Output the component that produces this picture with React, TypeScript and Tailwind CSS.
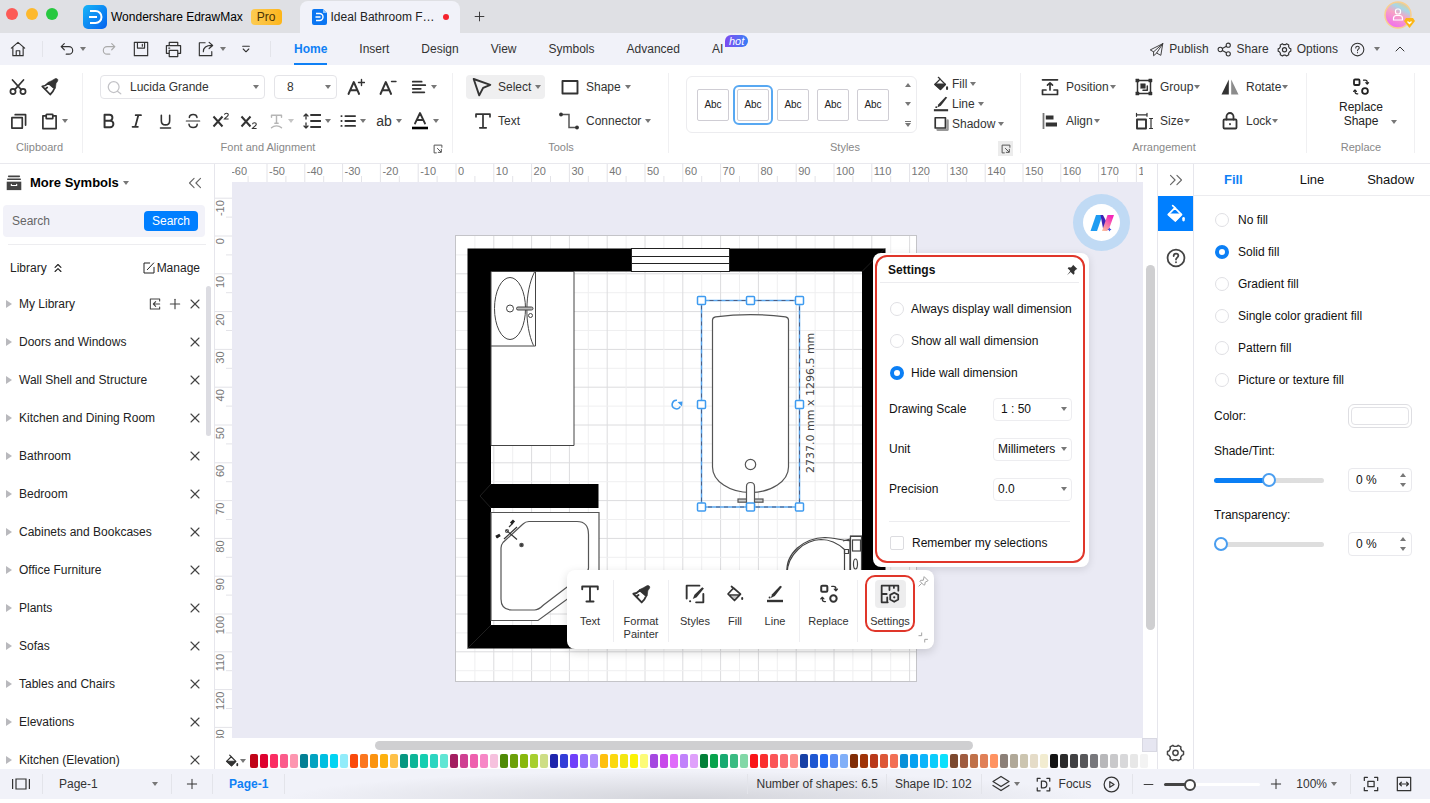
import { useState, type ReactNode } from "react";
import clsx from "clsx";
import { ChevronsLeft, ChevronsRight, ChevronsUp, ChevronUp, Minus, Plus, X } from "lucide-react";

interface IconProps {
  size?: number;
  stroke?: number;
  className?: string;
  children: ReactNode;
}

function Icon({ size = 18, stroke = 1.3, className, children }: IconProps) {
  return (
    <svg
      width={size}
      height={size}
      viewBox="0 0 18 18"
      fill="none"
      stroke="currentColor"
      strokeWidth={stroke}
      strokeLinecap="round"
      strokeLinejoin="round"
      aria-hidden="true"
      className={clsx("shrink-0", className)}
    >
      {children}
    </svg>
  );
}

function Caret({ up = false, className }: { up?: boolean; className?: string }) {
  return (
    <svg width="6" height="4" viewBox="0 0 6 4" aria-hidden="true" className={clsx("shrink-0 fill-[#777]", className)}>
      <path d={up ? "M0 4h6L3 0z" : "M0 0h6L3 4z"} />
    </svg>
  );
}

function BucketIcon({ size = 18 }: { size?: number }) {
  return (
    <Icon size={size} stroke={1.5}>
      <path d="M6 1.5l2.5 2.3M8 3.5l6 6-5.600 5.800L2 9.500z" />
      <path d="M2.500 9.300h11l-5.100 5.700z" fill="currentColor" />
      <path d="M15.800 12.800v1.700" strokeWidth="2.300" />
    </Icon>
  );
}

function PainterIcon({ size = 18 }: { size?: number }) {
  return (
    <Icon size={size} stroke={1.8}>
      <path d="M1.300 8.300C3.800 8 5.800 6.800 7.300 5l6.200 5.200c-.9 2.400-2.300 4.500-4.300 6.300z" />
      <path d="M7.300 4.300l3.400-1.600 3.800-2.200c1.600-.4 2.800 1 2.200 2.400L15 5.500l-.6 4.700-1.600-.3z" fill="currentColor" strokeWidth="0.600" />
      <path d="M4.300 10.900l1.900-1.400" />
    </Icon>
  );
}

function PenLineIcon({ size = 18 }: { size?: number }) {
  return (
    <Icon size={size}>
      <path d="M1 16h16" strokeWidth="2.400" strokeLinecap="butt" />
      <path d="M16 1.800L8.800 11 4.800 13l1.300-3.800L14.200.8z" fill="currentColor" stroke="none" />
      <circle cx="3.600" cy="12.600" r="1" fill="currentColor" stroke="none" />
    </Icon>
  );
}

function ReplaceIcon({ size = 18 }: { size?: number }) {
  return (
    <Icon size={size} stroke={1.8}>
      <rect x="2" y="1.500" width="5.500" height="5.500" rx="1" />
      <circle cx="13" cy="13" r="2.900" />
      <path
        d="M11.500 2.200h1.700c1.300 0 2 .8 2 2v1.500M13.800 4.600l1.400 1.500 1.400-1.500M5.800 15.800H5c-1.300 0-2-.8-2-2v-1.500M1.600 13.400L3 12l1.400 1.400"
        strokeWidth="1.200"
      />
    </Icon>
  );
}

function GearIcon({ size = 18 }: { size?: number }) {
  return (
    <Icon size={size} stroke={1.4}>
      <path d="M6.500 2.200l1.300 1h2.400l1.300-1 2.600 1.500-.2 1.700 1.100 2 1.600.7v2.900l-1.500.7-1.200 2 .2 1.600-2.600 1.500-1.400-1H7.900l-1.400 1-2.600-1.500.2-1.600-1.200-2-1.500-.7V8.100L3 7.400l1.100-2-.2-1.700z" />
      <circle cx="9" cy="9.300" r="2.500" />
    </Icon>
  );
}

function TextIcon({ size = 18 }: { size?: number }) {
  return (
    <Icon size={size} stroke={1.7}>
      <path d="M2 4.800V2.200h14v2.600M9 2.200v13.600M5.800 15.800h6.400" />
    </Icon>
  );
}

function HelpIcon({ size = 18, stroke = 1.3 }: { size?: number; stroke?: number }) {
  return (
    <Icon size={size} stroke={stroke}>
      <circle cx="9" cy="9" r="7.600" />
      <path d="M6.900 7.200C6.900 5.800 7.800 5 9 5s2.100.8 2.100 2c0 1.600-2.100 1.700-2.100 3.400M9 12.700v.2" />
    </Icon>
  );
}

function LauncherIcon() {
  return (
    <Icon size={10} stroke={1.8}>
      <path d="M6 16H2V2h14v4M8 8l6 6M15 9.500V15H9.500" />
    </Icon>
  );
}

function Divider({ className }: { className?: string }) {
  return <div className={clsx("w-px shrink-0 bg-[#e3e4ea]", className)} />;
}

function TitleBar() {
  return (
    <header className="flex h-[33px] shrink-0 items-end bg-[#dfe0e4]">
      <div className="ml-1.5 flex gap-2 self-start pt-2">
        <button type="button" aria-label="Close" className="size-3 rounded-full bg-[#fc5b57]" />
        <button type="button" aria-label="Minimize" className="size-3 rounded-full bg-[#fdb92d]" />
        <button type="button" aria-label="Zoom" className="size-3 rounded-full bg-[#27c840]" />
      </div>
      <button type="button" className="ml-[25px] flex h-[33px] items-center gap-1 text-[12px] text-black">
        <svg width="24" height="24" viewBox="0 0 24 24" aria-hidden="true">
          <defs>
            <linearGradient id="logo" x1="0" y1="0" x2="1" y2="1">
              <stop offset="0" stopColor="#16b5f8" />
              <stop offset="1" stopColor="#0561ee" />
            </linearGradient>
          </defs>
          <rect width="24" height="24" rx="5" fill="url(#logo)" />
          <path d="M7 6h5.500a6 6 0 010 12H7M6 12h8" fill="none" stroke="#fff" strokeWidth="2" />
        </svg>
        <span>Wondershare EdrawMax</span>
        <span className="ml-1 rounded bg-linear-to-r from-[#fccb50] to-[#fdb516] px-1.5 leading-4 text-[#4a3205]">Pro</span>
      </button>
      <button type="button" className="ml-[18px] flex h-8 w-[160px] items-center rounded-t-lg bg-[#f1f2f9] pl-3 text-[12px] text-[#222]">
        <svg width="15" height="16" viewBox="0 0 15 16" aria-hidden="true">
          <path d="M2 0h9l4 4v10a2 2 0 01-2 2H2a2 2 0 01-2-2V2a2 2 0 012-2z" fill="#0b76f2" />
          <path d="M11 0l4 4h-4z" fill="#8cc4fb" />
          <path d="M4 4.500h3.500a3.500 3.500 0 010 7H4M3.500 8h5" fill="none" stroke="#fff" strokeWidth="1.400" />
        </svg>
        <span className="ml-1">Ideal Bathroom F…</span>
        <span className="ml-2 size-1.5 rounded-full bg-[#f5222d]" />
      </button>
      <button type="button" aria-label="New tab" className="ml-3 flex h-[33px] items-center text-[#333]">
        <Plus size={15} strokeWidth={1.5} />
      </button>
      <button type="button" aria-label="Account" className="mr-[15px] ml-auto self-start">
        <svg width="32" height="30" viewBox="0 0 32 30" aria-hidden="true">
          <defs>
            <linearGradient id="avatar" x1="0.300" y1="1" x2="0.800" y2="0">
              <stop offset="0" stopColor="#f06bf0" />
              <stop offset="0.500" stopColor="#f7a3c4" />
              <stop offset="0.750" stopColor="#a6d8e8" />
              <stop offset="1" stopColor="#f6c878" />
            </linearGradient>
          </defs>
          <circle cx="15" cy="15" r="13" fill="url(#avatar)" stroke="#f8cf90" strokeWidth="1.500" />
          <g fill="none" stroke="#fff" strokeWidth="1.200">
            <rect x="12.500" y="9" width="5" height="5" rx="2" />
            <path d="M10.500 20v-1.500a3 3 0 013-3h3a3 3 0 013 3V20z" />
          </g>
          <path d="M23 18h7l2 3-5.500 7-5.500-7z" fill="#fcb614" />
          <path d="M24.500 21.500l2 2 2-2" fill="none" stroke="#fff" strokeWidth="1.300" />
        </svg>
      </button>
    </header>
  );
}

const MENUS = ["Home", "Insert", "Design", "View", "Symbols", "Advanced"];

function MenuBar() {
  return (
    <nav className="flex h-8 shrink-0 items-center bg-[#f1f2f9] text-[12px] text-[#333]">
      <button type="button" aria-label="Start page" className="ml-2.5">
        <Icon size={16}>
          <path d="M1.500 8L9 1.500 16.500 8M3.200 7v9.500h11.600V7M7 16.500V11h4v5.500" />
        </Icon>
      </button>
      <Divider className="ml-4 h-4" />
      <button type="button" aria-label="Undo" className="ml-[17px] flex items-center gap-1.5">
        <Icon size={14}>
          <path d="M5.500 2L1.500 6l4 4M2 6h9.500a4.800 4.800 0 010 9.600H8" strokeWidth="1.500" />
        </Icon>
        <Caret />
      </button>
      <button type="button" aria-label="Redo" className="ml-4 text-[#aaa]">
        <Icon size={14}>
          <path d="M12.500 2l4 4-4 4M16 6H6.500a4.800 4.800 0 000 9.600H10" strokeWidth="1.500" />
        </Icon>
      </button>
      <button type="button" aria-label="Save" className="ml-[17px]">
        <Icon size={16}>
          <path d="M1.500 1.500h15v15h-15zM5 1.500v6.500h8V1.500M10.500 3.800v2" />
        </Icon>
      </button>
      <button type="button" aria-label="Print" className="ml-4">
        <Icon size={17}>
          <path d="M4.500 5V1.500h9V5M4.500 13H1.500V5h15v8h-3M4.500 10h9v6.500h-9zM4 7.500h1" />
        </Icon>
      </button>
      <button type="button" aria-label="Export" className="ml-4 flex items-center gap-1.5">
        <Icon size={16}>
          <path d="M8 2H1.500v14.500h14V12M6 12c0-5 3-7 9.500-7M12.500 1.500L16.500 5l-4 3.500" />
        </Icon>
        <Caret />
      </button>
      <button type="button" aria-label="Customize toolbar" className="ml-[15px]">
        <Icon size={10} stroke={2}>
          <path d="M3 4h12M4 9l5 5 5-5" />
        </Icon>
      </button>
      <Divider className="ml-[19px] h-4" />
      <div className="ml-[23px] flex h-full items-center gap-8">
        {MENUS.map((menu, index) => (
          <button
            key={menu}
            type="button"
            className={clsx(
              "h-full border-y-2 border-transparent",
              index === 0 && "border-b-[#0f80f5] font-bold text-[#0f80f5]",
            )}
          >
            {menu}
          </button>
        ))}
        <button type="button" className="relative h-full">
          AI
          <span className="absolute top-[2px] left-[13px] rounded-full rounded-bl-none bg-linear-to-r from-[#7a4af0] to-[#2f7df6] px-1 text-[11px] leading-3 text-white italic">
            hot
          </span>
        </button>
      </div>
      <div className="mr-[22px] ml-auto flex items-center">
        <button type="button" className="flex items-center gap-[5px]">
          <Icon size={15}>
            <path d="M16.500 2L1.500 9.500l4 2.300L16.500 2l-2.300 14-5-2.700M5.500 11.800v4.700l3.700-3.200L16.500 2" strokeWidth="1.100" />
          </Icon>
          Publish
        </button>
        <button type="button" className="ml-2 flex items-center gap-[5px]">
          <Icon size={15}>
            <circle cx="4" cy="9" r="2.700" />
            <circle cx="13.500" cy="3.800" r="2.500" />
            <circle cx="13.500" cy="14.200" r="2.500" />
            <path d="M6.400 7.700l4.900-2.700M6.400 10.300l4.900 2.700" />
          </Icon>
          Share
        </button>
        <button type="button" className="ml-2 flex items-center gap-[5px]">
          <GearIcon size={15} />
          Options
        </button>
        <button type="button" aria-label="Help" className="ml-3 flex items-center gap-2">
          <HelpIcon size={15} />
          <Caret className="ml-px" />
        </button>
        <button type="button" aria-label="Collapse ribbon" className="ml-3">
          <ChevronUp size={16} strokeWidth={1.5} />
        </button>
      </div>
    </nav>
  );
}

interface GroupProps {
  label: string;
  className?: string;
  launcher?: boolean;
  shaded?: boolean;
  children: ReactNode;
}

function Group({ label, className, launcher, shaded, children }: GroupProps) {
  return (
    <section className={clsx("relative flex shrink-0 flex-col pt-[5px]", className)}>
      <div className="flex h-[68px] flex-col">{children}</div>
      <div className="text-center text-[11px] leading-[18px] text-[#888]">{label}</div>
      {launcher && (
        <button
          type="button"
          aria-label={`${label} options`}
          className={clsx("absolute right-2 bottom-[7px] flex size-[15px] items-center justify-center text-[#555]", shaded && "bg-[#ececec]")}
        >
          <LauncherIcon />
        </button>
      )}
      <Divider className="absolute top-2 right-0 h-[80px] !bg-[#f0f0f2]" />
    </section>
  );
}

function ToolButton({ label, className, children }: { label: string; className?: string; children: ReactNode }) {
  return (
    <button type="button" aria-label={label} className={clsx("flex h-[34px] items-center justify-center gap-1", className)}>
      {children}
    </button>
  );
}

function ScriptIcon({ sub = false }: { sub?: boolean }) {
  return (
    <svg width="18" height="18" viewBox="0 0 18 18" fill="none" stroke="currentColor" aria-hidden="true">
      <path d="M1.500 4.500l9 10M10.500 4.500l-9 10" strokeWidth="2" />
      <path
        d={sub ? "M12.500 12.200c.2-2 3.800-2 3.800 0 0 1.500-2.600 2.500-3.900 4.300h4.200" : "M12.500 2.700c.2-2 3.800-2 3.800 0 0 1.500-2.600 2.500-3.900 4.300h4.200"}
        strokeWidth="1.100"
      />
    </svg>
  );
}

function FontGroup() {
  return (
    <Group label="Font and Alignment" launcher className="w-[370px]">
      <div className="flex h-[34px] items-center pl-[17px]">
        <label className="relative flex h-6 w-[165px] items-center rounded border border-[#e4e4e8]">
          <Icon size={15} stroke={1.5} className="ml-1.5 text-[#c2c2c6]">
            <circle cx="8" cy="8.500" r="6.500" />
            <path d="M12.500 13.500l4 3" />
          </Icon>
          <select aria-label="Font family" className="h-full w-full appearance-none pl-2 outline-none">
            <option>Lucida Grande</option>
            <option>Helvetica</option>
          </select>
          <Caret className="absolute right-[5px]" />
        </label>
        <label className="relative ml-[9px] flex h-6 w-[63px] items-center rounded border border-[#e4e4e8]">
          <select aria-label="Font size" className="h-full w-full appearance-none pl-3 outline-none">
            <option>8</option>
            <option>10</option>
          </select>
          <Caret className="absolute right-[5px]" />
        </label>
        <ToolButton label="Increase font size" className="ml-[3px] w-8">
          <Icon stroke={1.9}>
            <path d="M1.500 16L6.800 4l5.300 12M3.200 12.300h7.200" />
            <path d="M14.500 1.500v6M11.500 4.500h6" strokeWidth="1.400" />
          </Icon>
        </ToolButton>
        <ToolButton label="Decrease font size" className="w-8">
          <Icon stroke={1.9}>
            <path d="M1.500 16L6.800 4l5.300 12M3.200 12.300h7.200" />
            <path d="M12.500 3.500h4.500" strokeWidth="1.400" />
          </Icon>
        </ToolButton>
        <ToolButton label="Paragraph alignment" className="w-10">
          <Icon size={16} stroke={2}>
            <path d="M2 3h10M2 7h14M2 11h9M2 15h13" />
          </Icon>
          <Caret />
        </ToolButton>
      </div>
      <div className="flex h-[34px] items-center pl-3">
        <ToolButton label="Bold" className="w-7">
          <Icon size={16} stroke={2.2}>
            <path d="M4 2h5.500a3.300 3.300 0 010 6.700H4zM4 8.700h6.300a3.600 3.600 0 010 7.300H4z" />
          </Icon>
        </ToolButton>
        <ToolButton label="Italic" className="w-7">
          <Icon size={16} stroke={2}>
            <path d="M7.500 2.500h6M4 15.500h6M10.500 2.500l-3.500 13" />
          </Icon>
        </ToolButton>
        <ToolButton label="Underline" className="w-7">
          <Icon size={15} stroke={1.9}>
            <path d="M4 1.500v6.500c0 3 2 5 5 5s5-2 5-5V1.500M3 16.800h12" />
          </Icon>
        </ToolButton>
        <ToolButton label="Strikethrough" className="w-7">
          <Icon size={16} stroke={1.7}>
            <path d="M13.500 5c-.3-2-2-3.200-4.300-3.200-2.500 0-4.300 1.200-4.300 3.200M13.700 12.700c0 2.200-1.900 3.600-4.500 3.600s-4.500-1.400-4.700-3.600" />
            <path d="M1.500 9h15" strokeWidth="1.400" />
          </Icon>
        </ToolButton>
        <ToolButton label="Superscript" className="w-7">
          <ScriptIcon />
        </ToolButton>
        <ToolButton label="Subscript" className="w-7">
          <ScriptIcon sub />
        </ToolButton>
        <ToolButton label="Text direction" className="w-9 text-[#b5b5b5]">
          <Icon size={15} stroke={1.7}>
            <path d="M3 4V1.500h12V4M9 1.500V11M7 11h4M3 16.500c3-3 9-3 12 0" />
          </Icon>
          <Caret className="!fill-[#c5c5c5]" />
        </ToolButton>
        <ToolButton label="Line spacing" className="w-9">
          <Icon stroke={1.9}>
            <path d="M8 3h9.500M8 9h9.500M8 15h9.500" />
            <path d="M3 2v5M3 11v5M1 4l2-2 2 2M1 14l2 2 2-2" strokeWidth="1.300" />
          </Icon>
          <Caret />
        </ToolButton>
        <ToolButton label="Bullets" className="w-9">
          <Icon size={16} stroke={2}>
            <path d="M6 3.500h11M6 9h11M6 14.500h11M1.500 3.500h.4M1.500 9h.4M1.500 14.500h.4" />
          </Icon>
          <Caret />
        </ToolButton>
        <ToolButton label="Text case" className="w-9">
          <span className="text-[14px]">ab</span>
          <Caret />
        </ToolButton>
        <ToolButton label="Font color" className="w-9">
          <Icon size={18} stroke={1.8}>
            <path d="M4 11.500L9 1l5 10.500M5.800 8h6.400" />
            <path d="M1 16h16" stroke="#000" strokeWidth="2.600" strokeLinecap="butt" />
          </Icon>
          <Caret />
        </ToolButton>
      </div>
    </Group>
  );
}

function StylesGroup() {
  return (
    <Group label="Styles" launcher shaded className="w-[352px]">
      <div className="flex h-full">
        <div className="mt-1.5 ml-[17px] flex h-[57px] w-[231px] items-center rounded-md border border-[#ececef] pl-1.5">
          {[0, 1, 2, 3, 4].map((n) => (
            <button
              key={n}
              type="button"
              className={clsx(
                "flex size-10 items-center justify-center rounded-md border-2",
                n === 1 ? "border-[#58a8f2]" : "border-transparent",
              )}
            >
              <span className="flex size-8 items-center justify-center rounded-xs border border-[#cfcdd4] text-[10px] font-medium text-[#222]">
                Abc
              </span>
            </button>
          ))}
          <div className="ml-auto flex flex-col items-center gap-[15px] pr-[5px]">
            <button type="button" aria-label="Previous styles" className="flex"><Caret up /></button>
            <button type="button" aria-label="Next styles" className="flex"><Caret /></button>
            <button type="button" aria-label="All styles" className="flex flex-col gap-px">
              <span className="h-px w-1.5 bg-[#777]" />
              <Caret />
            </button>
          </div>
        </div>
        <div className="ml-4 flex flex-col pt-1">
          <button type="button" className="flex h-5 items-center gap-[3px]">
            <BucketIcon size={16} /> Fill <Caret />
          </button>
          <button type="button" className="flex h-5 items-center gap-[3px]">
            <PenLineIcon size={16} /> Line <Caret />
          </button>
          <button type="button" className="flex h-5 items-center gap-[3px]">
            <Icon size={16} stroke={1.9}>
              <path d="M5 15.500h11.500V5" stroke="#999" strokeWidth="2.500" />
              <rect x="2.500" y="2" width="11.500" height="11.500" />
            </Icon>
            Shadow <Caret />
          </button>
        </div>
      </div>
    </Group>
  );
}

const ARRANGE: { label: string; icon: ReactNode }[] = [
  {
    label: "Position",
    icon: (
      <Icon stroke={1.7}>
        <path d="M1.500 1.800h15M9 12V5M6.500 7.200L9 4.800l2.500 2.400M5 12H1.500v4.500h15V12H13" />
      </Icon>
    ),
  },
  {
    label: "Group",
    icon: (
      <Icon stroke={1.5}>
        <rect x="2.500" y="2.500" width="13" height="13" />
        <path d="M1 1h3v3H1zM14 1h3v3h-3zM1 14h3v3H1zM14 14h3v3h-3zM5.800 5.800h4.500v4.500H5.800z" fill="currentColor" strokeWidth="0.500" />
        <path d="M12.300 8v4.300H8" />
      </Icon>
    ),
  },
  {
    label: "Rotate",
    icon: (
      <Icon>
        <path d="M7.800 1.500v15H.5z" fill="currentColor" stroke="none" />
        <path d="M10.200 1.500v15h7.300z" fill="#8c8c8c" stroke="none" />
      </Icon>
    ),
  },
  {
    label: "Align",
    icon: (
      <Icon>
        <path d="M2.500 1v16" stroke="#777" strokeWidth="1.800" strokeLinecap="butt" />
        <path d="M4.800 3.500h7.700v4H4.800zM4.800 10.500H16v4H4.800z" fill="currentColor" stroke="none" />
      </Icon>
    ),
  },
  {
    label: "Size",
    icon: (
      <Icon stroke={1.2}>
        <rect x="2" y="7.500" width="9" height="9" strokeWidth="1.900" />
        <path d="M1.500 2.800h10.500M1.500 1.300v3M12 1.300v3M14.500 6.500h3M14.500 16.500h3M16 6.500v10" />
      </Icon>
    ),
  },
  {
    label: "Lock",
    icon: (
      <Icon stroke={1.8}>
        <rect x="2.500" y="7.500" width="13" height="9" rx="1" />
        <path d="M5.500 7.500V4.500a3.500 3.500 0 017 0v3M9 12v.3" />
      </Icon>
    ),
  },
];

function Ribbon() {
  return (
    <div className="flex h-[99px] shrink-0 overflow-hidden border-b border-[#e9e9ee] bg-white text-[12px] text-[#333]">
      <Group label="Clipboard" className="w-[83px] pr-1">
        <div className="flex h-[34px] items-center pl-[9px]">
          <ToolButton label="Cut" className="w-[18px]">
            <Icon stroke={1.7}>
              <circle cx="4" cy="13.500" r="2.600" />
              <circle cx="14" cy="13.500" r="2.600" />
              <path d="M3.500 2l8.700 9.600M14.500 2l-8.700 9.600" />
            </Icon>
          </ToolButton>
          <ToolButton label="Format painter" className="ml-3.5 w-[18px]">
            <PainterIcon />
          </ToolButton>
        </div>
        <div className="flex h-[34px] items-center pl-[9px]">
          <ToolButton label="Copy" className="w-[18px]">
            <Icon size={17} stroke={1.8}>
              <rect x="2" y="5" width="11" height="11" />
              <path d="M5.500 1.800h11v11" />
            </Icon>
          </ToolButton>
          <ToolButton label="Paste" className="ml-3.5">
            <Icon size={17} stroke={1.8}>
              <path d="M5.500 3H2v13.500h14V3h-3.500" />
              <rect x="5.500" y="1.500" width="7" height="4.500" rx="0.500" />
            </Icon>
            <Caret />
          </ToolButton>
        </div>
      </Group>
      <FontGroup />
      <Group label="Tools" className="w-[216px]">
        <div className="grid grid-cols-[92px_auto] pl-[13px]">
          <div className="flex h-[34px] items-center">
            <button type="button" className="flex h-6 w-[79px] items-center rounded bg-[#efeff0] pl-1.5">
              <Icon size={20} stroke={1.7}>
                <path d="M1.500 1.800L16.500 7 10 9.800 6.500 16.500z" />
              </Icon>
              <span className="ml-1.5">Select</span>
              <Caret className="ml-1" />
            </button>
          </div>
          <button type="button" className="flex h-[34px] items-center pl-[3px]">
            <Icon stroke={1.9}>
              <rect x="1.500" y="3" width="15" height="12.500" />
            </Icon>
            <span className="ml-[7px]">Shape</span>
            <Caret className="ml-1" />
          </button>
          <button type="button" className="flex h-[34px] items-center pl-2">
            <TextIcon />
            <span className="ml-1.5">Text</span>
          </button>
          <button type="button" className="flex h-[34px] items-center pl-px">
            <svg width="20" height="18" viewBox="0 0 20 18" fill="none" stroke="#555" strokeWidth="1.500" aria-hidden="true">
              <path d="M2 2.500h8v13h8" />
              <circle cx="2" cy="2.500" r="1.900" fill="#333" stroke="none" />
              <circle cx="18" cy="15.500" r="1.900" fill="#333" stroke="none" />
            </svg>
            <span className="ml-[7px]">Connector</span>
            <Caret className="ml-1" />
          </button>
        </div>
      </Group>
      <StylesGroup />
      <Group label="Arrangement" className="w-[286px]">
        <div className="grid grid-cols-[94px_86px_auto] pl-5">
          {ARRANGE.map(({ label, icon }) => (
            <button key={label} type="button" className="flex h-[34px] items-center">
              <span className="flex w-[18px] justify-center">{icon}</span>
              <span className="ml-[7px]">{label}</span>
              <Caret className="ml-px" />
            </button>
          ))}
        </div>
      </Group>
      <Group label="Replace" className="w-[108px]">
        <button type="button" className="relative flex flex-col items-center pt-2 leading-[14px] text-[#222]">
          <ReplaceIcon />
          <span className="mt-1">Replace</span>
          <span>Shape</span>
          <Caret className="absolute right-[18px] bottom-[4px]" />
        </button>
      </Group>
    </div>
  );
}

const LIBRARIES = [
  "My Library",
  "Doors and Windows",
  "Wall Shell and Structure",
  "Kitchen and Dining Room",
  "Bathroom",
  "Bedroom",
  "Cabinets and Bookcases",
  "Office Furniture",
  "Plants",
  "Sofas",
  "Tables and Chairs",
  "Elevations",
  "Kitchen (Elevation)",
];

function SymbolsPanel() {
  return (
    <aside className="flex w-[215px] shrink-0 flex-col border-r border-[#e6e6ec] bg-white text-[12px] text-[#222]">
      <div className="flex h-[38px] shrink-0 items-center pr-2 pl-1.5">
        <Icon size={16} className="text-[#444]">
          <path d="M3 1.500h12M2 4.800h14" strokeWidth="1.800" />
          <path d="M.8 7.500h16.400V17H.8z" fill="currentColor" stroke="none" />
          <path d="M6 10.500v1.300h6v-1.300" stroke="#fff" />
        </Icon>
        <button type="button" className="ml-2 flex items-center gap-1 text-[13px] font-bold text-black">
          More Symbols <Caret />
        </button>
        <button type="button" aria-label="Collapse panel" className="ml-auto text-[#666]">
          <ChevronsLeft size={22} strokeWidth={1.2} />
        </button>
      </div>
      <div className="mt-[3px] mr-[9px] ml-[3px] flex h-8 shrink-0 items-center rounded bg-[#f2f2f9] pr-[7px] pl-[9px]">
        <input aria-label="Search symbols" placeholder="Search" className="w-0 flex-1 bg-transparent outline-none placeholder:text-[#666]" />
        <button type="button" className="h-5 w-[54px] rounded bg-[#007fff] text-white">
          Search
        </button>
      </div>
      <div className="mx-2 mt-[7px] h-px shrink-0 bg-[#ededf0]" />
      <div className="flex h-10 shrink-0 items-center pt-1.5 pr-3.5 pl-2.5">
        <button type="button" className="flex items-center gap-1">
          Library <ChevronsUp size={14} strokeWidth={2} />
        </button>
        <button type="button" className="ml-auto flex items-center gap-0.5">
          <Icon size={12} stroke={1.5}>
            <path d="M10 1.500H1.500v15h15V8M6.500 11.500l9.500-10" />
          </Icon>
          Manage
        </button>
      </div>
      <div className="flex min-h-0 flex-1 overflow-hidden">
        <ul className="min-w-0 flex-1">
          {LIBRARIES.map((name, index) => (
            <li key={name} className="flex h-[38px] items-center pl-1.5">
              <button type="button" className="flex items-center gap-[7px]">
                <svg width="6" height="8" viewBox="0 0 6 8" aria-hidden="true" className="fill-[#b9b9bd]">
                  <path d="M0 0l6 4-6 4z" />
                </svg>
                {name}
              </button>
              <div className="ml-auto flex items-center gap-1 text-[#444]">
                {index === 0 && (
                  <>
                    <button type="button" aria-label="Import library" className="flex size-4 items-center justify-center">
                      <Icon size={12} stroke={1.6}>
                        <path d="M16 4.500v-3H2v15h14v-3M16 9H7M10 5.500L6.500 9l3.500 3.500" />
                      </Icon>
                    </button>
                    <button type="button" aria-label="Add library">
                      <Plus size={16} strokeWidth={1.7} />
                    </button>
                  </>
                )}
                <button type="button" aria-label={`Close ${name}`}>
                  <X size={16} strokeWidth={1.6} />
                </button>
              </div>
            </li>
          ))}
        </ul>
        <div className="mt-px mr-[3px] ml-[3px] h-[150px] w-[5px] rounded-full bg-[#dcdce2]" />
      </div>
    </aside>
  );
}

// one ruler step (10 mm) on the canvas at 100 %
const STEP = 37.8;

function HorizontalRuler() {
  const marks = Array.from({ length: 25 }, (_, i) => i - 6);
  return (
    <svg className="h-[18px] min-w-0 flex-1 bg-white" aria-hidden="true">
      {marks.map((m) => {
        const x = 224 + m * STEP;
        return (
          <g key={m}>
            <path d={`M${x} 0v18M${x + STEP / 2} 12v6`} stroke="#e3e3e8" />
            <text x={x + 2} y="11" className="fill-[#777] text-[11px]">
              {m * 10}
            </text>
          </g>
        );
      })}
    </svg>
  );
}

function VerticalRuler() {
  const marks = Array.from({ length: 15 }, (_, i) => i - 1);
  return (
    <svg className="h-full w-[17px] shrink-0 bg-white" aria-hidden="true">
      {marks.map((m) => {
        const y = 54 + m * STEP;
        return (
          <g key={m}>
            <path d={`M0 ${y}h17M11 ${y + STEP / 2}h6`} stroke="#e3e3e8" />
            <text transform={`translate(9 ${y + 2}) rotate(-90)`} textAnchor="end" className="fill-[#777] text-[11px]">
              {m * 10}
            </text>
          </g>
        );
      })}
    </svg>
  );
}

const HANDLES = [
  [701.5, 300.5],
  [750.5, 300.5],
  [799.5, 300.5],
  [701.5, 404.5],
  [799.5, 404.5],
  [701.5, 507],
  [750.5, 507],
  [799.5, 507],
];

function FloorPlan() {
  const cols = Array.from({ length: 24 }, (_, i) => i + 1);
  return (
    <svg className="block h-full w-full" role="img" aria-label="Bathroom floor plan">
      <g transform="translate(-232 -182)" fill="none">
        <rect x="455.500" y="235.500" width="461" height="446" fill="#fff" stroke="#c4c4c8" />
        {cols.map((n) => (
          <g key={n} stroke={n % 2 ? "#efeff0" : "#dcdcde"}>
            <path d={`M${456 + (n * STEP) / 2} 236v445`} />
            {n < 24 && <path d={`M456 ${236 + (n * STEP) / 2}h460`} />}
          </g>
        ))}

        {/* walls */}
        <path d="M467.500 248.500H885.500V648.500H467.500zM491 271.500V484h107.500v24H491v117h371V271.500z" fill="#000" fillRule="evenodd" />
        <path d="M491 484l-11 12 11 12M467.500 648.500L491 625M885 248.500L862 271.500" stroke="#2c2c2c" strokeWidth="0.700" />
        <g stroke="#222">
          <rect x="631.500" y="248.500" width="98" height="23" fill="#fff" />
          <path d="M631.500 256.500h98M631.500 263.500h98" />
        </g>

        {/* counter and sink */}
        <g stroke="#444">
          <path d="M491 271.500h83v174h-83z" fill="#fff" />
          <path d="M491 271.500h44.500v74.500H491M534.500 272c-10 20-10 54-1 73.500" />
          <ellipse cx="510" cy="308.500" rx="15.500" ry="31" />
          <circle cx="510" cy="308.500" r="3.500" />
          <rect x="516.500" y="307" width="16.500" height="3" rx="1.500" fill="#bbb" />
          <circle cx="530.500" cy="315.500" r="2" />
        </g>

        {/* shower */}
        <g stroke="#555" strokeWidth="1.200">
          <path d="M491 512.500h108V576l-61 44.500h-47z" fill="#fff" />
          <path d="M501 548q0-3 2-5.500L523 524q2.500-2.500 6-2.500h48q11.500 0 11.500 13V568q0 3-3 5l-42 32q-5 5-9 5h-22.500q-11 0-11-11z" />
          <path d="M506 530l11 9.500M504 539l13-12M509 527l4-4M497 538l3-3" stroke="#333" />
          <path d="M511 523.500l3-3M496 537l4-2" stroke="#222" strokeWidth="3" />
          <circle cx="521.500" cy="545" r="1.700" fill="#333" />
          <circle cx="507" cy="531" r="1.500" />
        </g>

        {/* toilet */}
        <g stroke="#444" strokeWidth="1.200">
          <path d="M787 574c-2-21 17-36 38-36.500 10 0 18 3.500 25 3v33z" fill="#fff" />
          <path d="M787 574c0-20 18-34 34-34.500 9 0 17 4 23.500 10V574M850.500 536v38M843 541l7-2" />
          <rect x="850.500" y="536" width="11" height="40" fill="#fff" />
          <rect x="852.500" y="540" width="8" height="11" />
          <path d="M850.500 536.500h11M844.500 549.500h4v4h-4z" />
          <ellipse cx="855.500" cy="564" rx="2" ry="5" />
        </g>

        {/* bathtub */}
        <g stroke="#555" strokeWidth="1.200">
          <path d="M712.500 320q0-2.500 3-3.200 35-4.500 70 0 3 .7 3 3.200V467a38 25.500 0 01-76 0z" fill="#fff" />
          <circle cx="750.500" cy="464.500" r="5.200" />
          <rect x="738" y="499" width="25" height="3.200" fill="#ccc" />
          <path d="M746.500 507v-20.500q0-4 4-4t4 4V507z" fill="#fff" />
        </g>
        <text transform="translate(814 473) rotate(-90)" fontFamily="DejaVu Sans, sans-serif" fontSize="11" fill="#444">
          2737.0 mm x 1296.5 mm
        </text>

        {/* selection */}
        <rect x="701.500" y="300.500" width="98" height="206.500" stroke="#58a6ee" strokeWidth="1.500" />
        <rect x="701.500" y="300.500" width="98" height="206.500" stroke="#4b5f86" strokeDasharray="4 4" />
        {HANDLES.map(([x, y]) => (
          <rect key={`${x}-${y}`} x={x - 4} y={y - 4} width="8" height="8" rx="1" fill="#fff" stroke="#3e9bf0" strokeWidth="1.500" />
        ))}
        <path d="M677 400.300a4.300 4.300 0 103.300 6.200" stroke="#3e9bf0" strokeWidth="1.600" />
        <path d="M677.500 402l5-.5-.5 5z" fill="#3e9bf0" />
      </g>
    </svg>
  );
}

function Radio({ name, label, checked, onChange }: { name: string; label: string; checked: boolean; onChange: () => void }) {
  return (
    <label className="flex h-8 items-center whitespace-nowrap">
      <input
        type="radio"
        name={name}
        checked={checked}
        onChange={onChange}
        className="size-[14px] shrink-0 appearance-none rounded-full border border-[#e0e0e4] bg-white checked:border-4 checked:border-[#0b7ff5]"
      />
      {label}
    </label>
  );
}

const WALL_OPTIONS = ["Always display wall dimension", "Show all wall dimension", "Hide wall dimension"];

const SETTING_FIELDS = [
  { label: "Drawing Scale", value: "1 : 50" },
  { label: "Unit", value: "Millimeters" },
  { label: "Precision", value: "0.0" },
];

function SettingsPopup() {
  const [wall, setWall] = useState(WALL_OPTIONS[2]);

  return (
    <div className="absolute top-[71px] left-[641px] w-[216px] rounded-lg bg-white p-0.5 pr-1 pb-1 text-[12px] text-[#111] shadow-[0_2px_8px_rgba(0,0,0,0.12)]">
      <div className="flex h-[308px] flex-col rounded-[12px] border-2 border-[#e0362a] pr-1 pl-[3px]">
        <div className="flex h-[26px] shrink-0 items-center border-b border-[#ececef] pr-px pl-2">
          <h2 className="flex-1 font-bold">Settings</h2>
          <button type="button" aria-label="Pin">
            <Icon size={12} className="text-[#333]">
              <path d="M10.500 1l6.500 6.500-2 .8-2.500 2.500.2 3.700-1.500 1.500L7 12l-5.500 5 5-6.500-4-4L4 5l3.500.3L10 2.800z" fill="currentColor" stroke="none" />
            </Icon>
          </button>
        </div>
        <div className="mt-2.5 flex flex-col pl-2.5 [&_input]:mr-[7px]">
          {WALL_OPTIONS.map((option) => (
            <Radio key={option} name="wall" label={option} checked={wall === option} onChange={() => setWall(option)} />
          ))}
        </div>
        <div className="flex flex-col pl-[9px]">
          {SETTING_FIELDS.map((field) => (
            <label key={field.label} className="flex h-10 items-center">
              <span className="w-[104px]">{field.label}</span>
              <span className="relative flex h-[23px] w-[79px] items-center rounded border border-[#ededf0]">
                <select className={clsx("h-full w-full appearance-none outline-none", field.label === "Drawing Scale" ? "pl-[7px]" : "pl-1")}>
                  <option>{field.value}</option>
                </select>
                <Caret className="absolute right-1" />
              </span>
            </label>
          ))}
        </div>
        <div className="mx-[9px] mt-3 h-px bg-[#ececef]" />
        <label className="mt-3 flex items-center pl-2.5">
          <input type="checkbox" className="mr-2 size-[14px] appearance-none rounded-xs border border-[#dcdce0]" />
          Remember my selections
        </label>
      </div>
    </div>
  );
}

function FloatButton({ label, className, children }: { label: string; className?: string; children: ReactNode }) {
  return (
    <button type="button" className={clsx("flex flex-col items-center leading-[13px]", className)}>
      <span className="mb-[7px] flex h-7 items-center">{children}</span>
      {label}
    </button>
  );
}

function FloatingToolbar() {
  return (
    <div className="absolute top-[388px] left-[335px] flex h-[79px] w-[367px] rounded-lg bg-white pt-2.5 text-[11px] text-[#333] shadow-[0_3px_10px_rgba(0,0,0,0.15)]">
      <FloatButton label="Text" className="w-[46px]">
        <TextIcon size={20} />
      </FloatButton>
      <Divider className="h-[62px] !bg-[#eeeef1]" />
      <FloatButton label="Format Painter" className="w-[54px] px-1">
        <PainterIcon size={19} />
      </FloatButton>
      <Divider className="h-[62px] !bg-[#eeeef1]" />
      <FloatButton label="Styles" className="ml-1.5 w-10">
        <Icon size={20} stroke={1.7}>
          <path d="M1.500 13V1.500H13M16.500 9v7.500H10" />
          <path d="M17 4l-6.500 8L7 13.500l1.500-3.800L15.500 3z" fill="currentColor" stroke="none" />
          <path d="M4.500 15.500h.2" />
        </Icon>
      </FloatButton>
      <FloatButton label="Fill" className="w-10">
        <Icon size={18} stroke={1.7}>
          <path d="M5.500 1.500l3 2.500M7.500 3l7 6.200-6 6.300L2 9zM4 10h9" />
          <path d="M5 11h7l-3.500 3.500z" fill="currentColor" stroke="none" opacity="0.300" />
          <path d="M16.200 13v1" strokeWidth="2" />
        </Icon>
      </FloatButton>
      <FloatButton label="Line" className="w-10">
        <PenLineIcon size={18} />
      </FloatButton>
      <Divider className="ml-1 h-[62px] !bg-[#eeeef1]" />
      <FloatButton label="Replace" className="w-[57px]">
        <ReplaceIcon size={20} />
      </FloatButton>
      <Divider className="h-[62px] !bg-[#eeeef1]" />
      <button
        type="button"
        className="-mt-[5px] ml-[7px] flex h-[57px] w-[50px] flex-col items-center rounded-[10px] border-2 border-[#e0362a] pt-[3px] leading-[13px]"
      >
        <span className="mb-[7px] flex h-7 w-[31px] items-center justify-center rounded bg-[#ededee]">
          <Icon size={20} stroke={1.6}>
            <path d="M16.500 6V1.500h-15v15H7M1.500 9H6M6.500 12v4.500M8.500 1.500v4M12.500 1.500v2" />
            <path d="M12.800 7.800l3.600 2v4.200l-3.600 2-3.600-2V9.800z" />
            <circle cx="12.800" cy="12" r="1" fill="currentColor" stroke="none" />
          </Icon>
        </span>
        Settings
      </button>
      <div className="ml-[3px] flex flex-col justify-between pb-1.5 text-[#999]">
        <button type="button" aria-label="Pin toolbar" className="-mt-1">
          <Icon size={11} stroke={1.5}>
            <path d="M10.500 1.500l6 6-5 3v3.500l-2 1L3 8.500l1.500-1.500H8zM5.500 12.500L1.500 16.500" />
          </Icon>
        </button>
        <button type="button" aria-label="Collapse toolbar">
          <Icon size={11} stroke={1.5}>
            <path d="M1.500 6h4.500V1.500M11 16.500V12h4.500" />
          </Icon>
        </button>
      </div>
    </div>
  );
}

const PALETTE = [
  "#c00418", "#dd0330", "#fa2e63", "#fb5c8b", "#fd96b0", "#038094", "#03a3c0", "#00bfe0", "#03d4f2", "#92ecfa",
  "#f94a0c", "#fb7720", "#fb9310", "#fdb10f", "#fec148", "#069780", "#0db597", "#15ceb0", "#2cd5c0", "#60e6d4",
  "#a31e60", "#cf4092", "#ee60ae", "#f787c6", "#f6c1de", "#4f8a06", "#6ca009", "#88b80c", "#a7cf30", "#cede85",
  "#1f25ac", "#343dd8", "#7040fa", "#9570fb", "#b190fc", "#fec00d", "#fbd80f", "#f3e610", "#fbf204", "#fcfb78",
  "#a548e0", "#c849ea", "#df6cfa", "#c182fb", "#dfa0fb", "#038038", "#08a34c", "#18aa70", "#3abb82", "#82d8a7",
  "#f91518", "#fa3030", "#fb5557", "#fb7074", "#fd8e8a", "#1740a5", "#1f57d0", "#2468f0", "#5a8df5", "#82b0f8",
  "#812d06", "#a03408", "#b9391a", "#dd5838", "#f27055", "#0891d8", "#06a2f0", "#0cb5fa", "#0bccfb", "#0ce0fc",
  "#7c492f", "#a05c40", "#c0714a", "#e08058", "#ff9362", "#8c8078", "#b0a898", "#ccc5b0", "#e5dcc8", "#f2ecd0",
  "#141414", "#2b2b2b", "#414143", "#58585a", "#78787c", "#b8b8ba", "#c9c9cb", "#d8d8da", "#e7e7e7", "#f3f3f3",
];

function Canvas() {
  return (
    <main className="flex min-w-0 flex-1 flex-col overflow-hidden bg-white">
      <div className="flex h-[18px] shrink-0 pr-[14px]">
        <div className="w-[17px] shrink-0" />
        <HorizontalRuler />
      </div>
      <div className="flex min-h-0 flex-1">
        <VerticalRuler />
        <div className="relative min-w-0 flex-1 bg-[#eaeaf4]">
          <FloorPlan />
          <button
            type="button"
            aria-label="AI assistant"
            className="absolute top-3 right-[13px] flex size-[57px] items-center justify-center rounded-full bg-[#c0daf4]"
          >
            <span className="flex size-[37px] items-center justify-center rounded-full bg-white">
              <svg width="24" height="20" viewBox="0 0 24 20" aria-hidden="true">
                <defs>
                  <linearGradient id="aiRight" x1="0" y1="1" x2="0.600" y2="0">
                    <stop offset="0" stopColor="#fbc59c" />
                    <stop offset="1" stopColor="#f426b8" />
                  </linearGradient>
                </defs>
                <path d="M6 2h6.500L7 18H.5z" fill="#1e9cf2" />
                <path d="M10.500 2h2.500l4 8-3.500 8z" fill="#3b24b5" />
                <path d="M17.500 2h6.500l-5 14-2 2h-5z" fill="url(#aiRight)" />
                <path d="M19.500 14.500l.7 1.300 1.300.7-1.300.7-.7 1.300-.7-1.300-1.300-.7 1.300-.7z" fill="#3f51e0" />
              </svg>
            </span>
          </button>
          <SettingsPopup />
          <FloatingToolbar />
        </div>
        <div className="w-[14px] shrink-0 pt-[83px] pl-[3px]">
          <div className="h-[365px] w-[9px] rounded-full bg-[#cfcfd1]" />
        </div>
      </div>
      <div className="flex h-[14px] shrink-0 items-center">
        <div className="ml-[160px] h-[9px] w-[598px] rounded-full bg-[#cfcfd1]" />
        <div className="ml-auto h-full w-[15px] border border-[#d8d8e2] bg-[#e6e6f1]" />
      </div>
      <div className="flex h-[17px] shrink-0 items-center pl-2.5">
        <button type="button" aria-label="Fill color" className="flex w-[25px] items-center gap-px text-[#333]">
          <BucketIcon size={14} />
          <Caret />
        </button>
        <div className="flex gap-0.5">
          {PALETTE.map((color) => (
            <button
              key={color}
              type="button"
              aria-label={color}
              className="h-[14px] w-2 shrink-0 rounded-xs"
              style={{ backgroundColor: color }}
            />
          ))}
        </div>
      </div>
    </main>
  );
}

function ToolStrip() {
  return (
    <div className="flex w-[37px] shrink-0 flex-col items-center border-x border-[#e6e6ec] bg-white text-[#444]">
      <button type="button" aria-label="Collapse properties" className="flex h-8 items-center text-[#666]">
        <ChevronsRight size={22} strokeWidth={1.2} />
      </button>
      <button type="button" aria-label="Fill panel" className="flex h-[35px] w-full items-center justify-center bg-[#007fff] text-white">
        <BucketIcon size={20} />
      </button>
      <button type="button" aria-label="Help" className="mt-[17px]">
        <HelpIcon size={20} stroke={1.6} />
      </button>
      <button type="button" aria-label="Settings" className="mt-auto mb-[7px]">
        <GearIcon size={19} />
      </button>
    </div>
  );
}

const FILL_OPTIONS = ["No fill", "Solid fill", "Gradient fill", "Single color gradient fill", "Pattern fill", "Picture or texture fill"];

function PercentSlider({ label, value, track }: { label: string; value: number; track: string }) {
  return (
    <div className="flex h-8 items-center justify-between">
      <input
        type="range"
        aria-label={label}
        defaultValue={value}
        className={clsx(
          "h-4 w-[110px] appearance-none bg-transparent",
          "[&::-webkit-slider-runnable-track]:h-[5px] [&::-webkit-slider-runnable-track]:rounded-full",
          "[&::-webkit-slider-thumb]:-mt-[5px] [&::-webkit-slider-thumb]:size-[14px] [&::-webkit-slider-thumb]:appearance-none [&::-webkit-slider-thumb]:rounded-full [&::-webkit-slider-thumb]:border-2 [&::-webkit-slider-thumb]:border-[#4a9ef0] [&::-webkit-slider-thumb]:bg-white",
          track,
        )}
      />
      <div className="flex h-6 w-16 items-center rounded border border-[#e9e9ed] pr-[5px] pl-[7px]">
        <input aria-label={`${label} value`} defaultValue="0 %" className="w-0 flex-1 outline-none" />
        <span className="flex flex-col gap-1.5">
          <button type="button" aria-label="Increase" className="flex"><Caret up /></button>
          <button type="button" aria-label="Decrease" className="flex"><Caret /></button>
        </span>
      </div>
    </div>
  );
}

function FillPanel() {
  const [fill, setFill] = useState(FILL_OPTIONS[1]);

  return (
    <aside className="w-[236px] shrink-0 bg-white text-[12px] text-[#111]">
      <div className="flex h-8 items-center border-b border-[#ececef] text-[13px]">
        <button type="button" className="w-[79px] font-bold text-[#0f80f5]">Fill</button>
        <button type="button" className="w-[79px]">Line</button>
        <button type="button" className="w-[79px]">Shadow</button>
      </div>
      <div className="flex flex-col pt-2 pr-[18px] pl-5">
        <div className="flex flex-col pl-px [&_input]:mr-[9px]">
          {FILL_OPTIONS.map((option) => (
            <Radio key={option} name="fill" label={option} checked={fill === option} onChange={() => setFill(option)} />
          ))}
        </div>
        <div className="flex h-10 items-center justify-between">
          <span>Color:</span>
          <button type="button" aria-label="Fill color" className="h-6 w-16 rounded-md border border-[#dedee2] p-0.5">
            <span className="block h-full rounded border border-[#e2e2e6]" />
          </button>
        </div>
        <span className="mt-1.5 leading-[18px]">Shade/Tint:</span>
        <div className="mt-1">
          <PercentSlider
            label="Shade/Tint"
            value={50}
            track="[&::-webkit-slider-runnable-track]:bg-linear-to-r [&::-webkit-slider-runnable-track]:from-[#0b7ff5] [&::-webkit-slider-runnable-track]:from-50% [&::-webkit-slider-runnable-track]:to-[#dedede] [&::-webkit-slider-runnable-track]:to-50%"
          />
        </div>
        <span className="mt-2.5 leading-[18px]">Transparency:</span>
        <div className="mt-1">
          <PercentSlider label="Transparency" value={0} track="[&::-webkit-slider-runnable-track]:bg-[#dedede]" />
        </div>
      </div>
    </aside>
  );
}

function StatusBar() {
  return (
    <footer className="mb-1 flex h-[30px] shrink-0 items-center bg-[#f1f2f9] bg-[radial-gradient(ellipse_400px_28px_at_48%_100%,#d3d4da,transparent)] text-[12px] text-[#333]">
      <button type="button" aria-label="Page view" className="ml-3">
        <svg width="18" height="12" viewBox="0 0 18 12" fill="none" stroke="currentColor" strokeWidth="1.200" aria-hidden="true">
          <path d="M.6 1v10M17.400 1v10M4 1h10v10H4z" />
        </svg>
      </button>
      <Divider className="ml-3 h-5" />
      <label className="relative ml-4 flex items-center">
        <select aria-label="Page" className="w-[102px] appearance-none outline-none">
          <option>Page-1</option>
        </select>
        <Caret className="absolute right-[3px]" />
      </label>
      <Divider className="ml-2.5 h-5" />
      <button type="button" aria-label="Add page" className="ml-3">
        <Plus size={16} strokeWidth={1.5} />
      </button>
      <Divider className="ml-3 h-5" />
      <button type="button" className="ml-4 font-bold text-[#0f80f5]">Page-1</button>
      <Divider className="ml-4 h-5" />

      <div className="ml-auto flex items-center whitespace-nowrap">
        <Divider className="h-5" />
        <span className="ml-2">Number of shapes: 6.5</span>
        <Divider className="ml-2 h-5" />
        <span className="ml-2">Shape ID: 102</span>
        <Divider className="ml-[9px] h-5" />
        <button type="button" aria-label="Layers" className="ml-2.5 flex items-center gap-1">
          <Icon>
            <path d="M9 1.500L1 6.500l8 5 8-5zM1 10.500l8 5 8-5" />
          </Icon>
          <Caret />
        </button>
        <button type="button" className="ml-4 flex items-center gap-2">
          <Icon size={15} stroke={1.5}>
            <path d="M5 1.500H1.500V5M13 1.500h3.500V5M5 16.500H1.500V13M13 16.500h3.500V13M6.500 5v8H9a4 4 0 000-8z" />
          </Icon>
          Focus
        </button>
        <button type="button" aria-label="Present" className="ml-3">
          <Icon size={17}>
            <circle cx="9" cy="9" r="7.800" />
            <path d="M7.200 6v6l4.500-3z" />
          </Icon>
        </button>
        <Divider className="ml-3 h-5" />
        <button type="button" aria-label="Zoom out" className="ml-2">
          <Minus size={15} strokeWidth={1.5} />
        </button>
        <input
          type="range"
          aria-label="Zoom"
          defaultValue={23}
          className="ml-2 h-4 w-[96px] appearance-none bg-transparent [&::-webkit-slider-runnable-track]:h-[3px] [&::-webkit-slider-runnable-track]:rounded-full [&::-webkit-slider-runnable-track]:bg-linear-to-r [&::-webkit-slider-runnable-track]:from-[#444] [&::-webkit-slider-runnable-track]:from-25% [&::-webkit-slider-runnable-track]:to-white [&::-webkit-slider-runnable-track]:to-25% [&::-webkit-slider-thumb]:-mt-1 [&::-webkit-slider-thumb]:size-3 [&::-webkit-slider-thumb]:appearance-none [&::-webkit-slider-thumb]:rounded-full [&::-webkit-slider-thumb]:border-2 [&::-webkit-slider-thumb]:border-[#444] [&::-webkit-slider-thumb]:bg-white"
        />
        <button type="button" aria-label="Zoom in" className="ml-2">
          <Plus size={16} strokeWidth={1.5} />
        </button>
        <button type="button" className="ml-3 flex items-center gap-1">
          100% <Caret />
        </button>
        <Divider className="ml-[13px] h-5" />
        <button type="button" aria-label="Fit page" className="ml-3">
          <Icon size={16} stroke={1.4}>
            <path d="M5 1.500H1.500V5M13 1.500h3.500V5M5 16.500H1.500V13M13 16.500h3.500V13M5.500 6h7v6h-7z" />
          </Icon>
        </button>
        <button type="button" aria-label="Fit width" className="mr-[18px] ml-[17px]">
          <Icon size={16} stroke={1.4}>
            <path d="M1.500 1.500h15v15h-15zM4 9h10M6 7L4 9l2 2M12 7l2 2-2 2" />
          </Icon>
        </button>
      </div>
    </footer>
  );
}

export default function App() {
  return (
    <div className="flex h-screen flex-col overflow-hidden bg-white font-['Liberation_Sans',Arial,sans-serif]">
      <TitleBar />
      <MenuBar />
      <Ribbon />
      <div className="flex min-h-0 flex-1">
        <SymbolsPanel />
        <Canvas />
        <ToolStrip />
        <FillPanel />
      </div>
      <StatusBar />
    </div>
  );
}
